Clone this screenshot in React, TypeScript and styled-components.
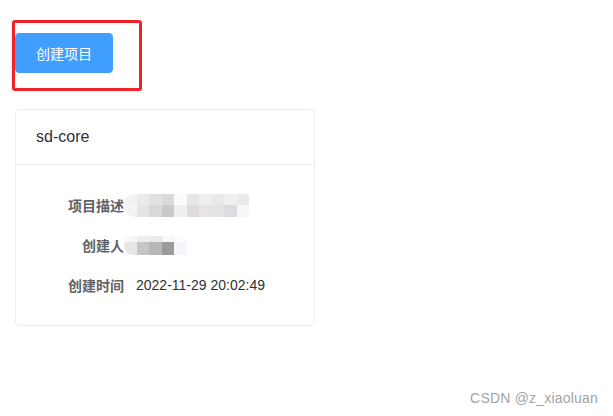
import React from 'react';
import styled, { createGlobalStyle } from 'styled-components';

const GlobalStyle = createGlobalStyle`
  html, body {
    margin: 0;
    padding: 0;
    background: #ffffff;
    font-family: "Liberation Sans", "Noto Sans CJK SC", Arial, sans-serif;
  }
`;

const Page = styled.div`
  position: relative;
  min-height: 100vh;
  box-sizing: border-box;
  padding: 20px 0 0 15px;
`;

const Highlight = styled.div`
  display: inline-flex;
  margin-left: -3px;
  padding: 10px 26px 15px 0;
  border: 3px solid #f0222a;
  border-radius: 3px;
`;

const PrimaryButton = styled.button`
  height: 40px;
  padding: 0 20px;
  border: 1px solid #409eff;
  border-radius: 4px;
  background: #409eff;
  color: #ffffff;
  font-family: inherit;
  font-size: 14px;
  cursor: pointer;
`;

const Card = styled.div`
  width: 300px;
  margin-top: 18px;
  box-sizing: border-box;
  border: 1px solid #ebeef5;
  border-radius: 4px;
  background: #ffffff;
  color: #303133;
`;

const CardHeader = styled.div`
  padding: 18px 20px;
  line-height: 18px;
  font-size: 16px;
  border-bottom: 1px solid #ebeef5;
`;

const CardBody = styled.div`
  display: flex;
  flex-direction: column;
  padding: 20px;
`;

const Row = styled.div`
  display: flex;
  align-items: center;
  height: 40px;
`;

const Label = styled.span`
  width: 100px;
  box-sizing: border-box;
  padding-right: 12px;
  text-align: right;
  font-size: 14px;
  font-weight: 700;
  color: #606266;
`;

const Value = styled.span`
  font-size: 14px;
  color: #303133;
`;

const Mosaic = styled.div<{ $cols: number }>`
  display: grid;
  grid-template-columns: repeat(${(p) => p.$cols}, 12.5px);
  margin-left: -12px;
  border-radius: 10px 2px 2px 10px;
  overflow: hidden;
  filter: blur(0.6px);
`;

const Tile = styled.span<{ $c: string; $h: number }>`
  height: ${(p) => p.$h}px;
  background: ${(p) => p.$c};
`;

const Watermark = styled.div`
  position: absolute;
  right: 15px;
  bottom: 10px;
  font-size: 14px;
  color: #a3a3a3;
  letter-spacing: 0.2px;
`;

const descTiles = [
  '#f2f2f2', '#ebebeb', '#e2e2e2', '#dadada', '#fbfbfb', '#eae6e6', '#eeeef1', '#e9e9e9', '#f0f0f0', '#eaeaea',
  '#f3f3f3', '#e5e5e5', '#d9d9d9', '#c9c9c9', '#efefef', '#e1dada', '#e5e5e9', '#e3e3e3', '#dddde1', '#f6f6f6',
];

const ownerTiles = [
  '#f4f4f4', '#eeeeee', '#eaeaea', '#f6f8fa', '#fbfcfe',
  '#e6e6e6', '#c6c6c6', '#b7b7b7', '#9e9a98', '#f3f7fb',
];

export default function App() {
  return (
    <Page>
      <GlobalStyle />
      <Highlight>
        <PrimaryButton>创建项目</PrimaryButton>
      </Highlight>

      <Card>
        <CardHeader>sd-core</CardHeader>
        <CardBody>
          <Row>
            <Label>项目描述</Label>
            <Mosaic $cols={10}>
              {descTiles.map((c, i) => (
                <Tile key={i} $c={c} $h={11.5} />
              ))}
            </Mosaic>
          </Row>
          <Row>
            <Label>创建人</Label>
            <Mosaic $cols={5}>
              {ownerTiles.map((c, i) => (
                <Tile key={i} $c={c} $h={i < 5 ? 6 : 13} />
              ))}
            </Mosaic>
          </Row>
          <Row>
            <Label>创建时间</Label>
            <Value>2022-11-29 20:02:49</Value>
          </Row>
        </CardBody>
      </Card>

      <Watermark>CSDN @z_xiaoluan</Watermark>
    </Page>
  );
}
